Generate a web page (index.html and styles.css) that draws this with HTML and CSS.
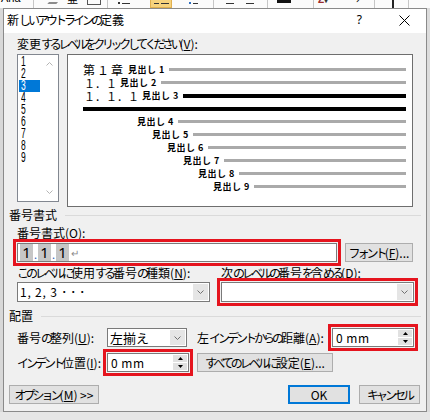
FILE: index.html
```html
<!DOCTYPE html>
<html lang="ja">
<head>
<meta charset="utf-8">
<title>新しいアウトラインの定義</title>
<link rel="stylesheet" href="styles.css">
</head>
<body>
<div class="ribbon">
  <span class="rb-text">Aria</span>
  <span class="rb-sep sep-a"></span>
  <span class="rb-eraser"></span>
  <span class="rb-kanji">亜</span>
  <span class="rb-box"></span>
  <span class="rb-sep sep-b"></span>
  <span class="rb-bullet"><i class="dot"></i><i class="dash"></i></span>
  <span class="rb-yellow"><i class="dash short"></i><i class="dash"></i></span>
  <span class="rb-num"><i class="dot blue"></i><i class="dash short"></i></span>
  <span class="rb-sep sep-d"></span>
  <span class="rb-lines"><i class="dash"></i></span>
  <span class="rb-lines l2"><i class="dash"></i></span>
  <span class="rb-sep sep-e"></span>
  <span class="rb-a"></span>
  <span class="rb-sep sep-f"></span>
  <span class="rb-z">Z<b>▾</b></span>
  <span class="rb-arrow">→</span>
  <span class="rb-sep sep-g"></span>
  <span class="rb-bar"></span>
  <span class="rb-sep sep-h"></span>
</div>
<div class="stage">
  <div class="bd-left"></div>
  <div class="dialog">
    <div class="titlebar">
      <span class="title">新<span class="k">しいアウトラインの</span>定義</span>
      <span class="help">?</span>
      <svg class="close" viewBox="0 0 11 11"><path d="M0.5 0.5L10.5 10.5M10.5 0.5L0.5 10.5" stroke="#000" stroke-width="1" fill="none"/></svg>
    </div>
    <div class="client">
      <div class="lbl lbl-top">変更<span class="k k2">するレベルをクリックしてください</span>(<u>V</u>):</div>
      <div class="toprow">
        <div class="listbox">
          <div class="items">
            <div class="item"><span>1</span></div>
            <div class="item"><span>2</span></div>
            <div class="item sel"><span>3</span></div>
            <div class="item"><span>4</span></div>
            <div class="item"><span>5</span></div>
            <div class="item"><span>6</span></div>
            <div class="item"><span>7</span></div>
            <div class="item"><span>8</span></div>
            <div class="item"><span>9</span></div>
          </div>
          <div class="lb-scroll">
            <svg class="chev" viewBox="0 0 7 4"><polyline points="0.5,3.5 3.5,0.5 6.5,3.5" fill="none" stroke="#b4b4b4" stroke-width="1"/></svg>
            <svg class="chev" viewBox="0 0 7 4"><polyline points="0.5,0.5 3.5,3.5 6.5,0.5" fill="none" stroke="#b4b4b4" stroke-width="1"/></svg>
          </div>
        </div>
        <div class="preview">
          <div class="prow"><span class="pn ch">第１章</span><span class="ph">見出し 1</span><span class="pl"></span></div>
          <div class="prow in"><span class="pn">１．１</span><span class="ph">見出し 2</span><span class="pl"></span></div>
          <div class="prow in"><span class="pn">１．１．１</span><span class="ph">見出し 3</span><span class="pl blk"></span></div>
          <div class="prow"><span class="pl blk"></span></div>
          <div class="prow i4"><span class="ph">見出し 4</span><span class="pl"></span></div>
          <div class="prow i5"><span class="ph">見出し 5</span><span class="pl"></span></div>
          <div class="prow i6"><span class="ph">見出し 6</span><span class="pl"></span></div>
          <div class="prow i7"><span class="ph">見出し 7</span><span class="pl"></span></div>
          <div class="prow i8"><span class="ph">見出し 8</span><span class="pl"></span></div>
          <div class="prow i9"><span class="ph">見出し 9</span><span class="pl"></span></div>
        </div>
      </div>

      <div class="grp">番号書式</div>
      <div class="lbl lbl-fmt">番号書式(<u>O</u>):</div>
      <div class="fmtrow">
        <div class="fmt hl"><span class="fb">1</span><span class="fd">.</span><span class="fb">1</span><span class="fd">.</span><span class="fb">1</span><span class="ret">↵</span></div>
        <div class="btn btn-font"><span class="k">フォント</span>(<u>F</u>)...</div>
      </div>
      <div class="lblrow">
        <div class="lbl"><span class="k">このレベルに</span>使用<span class="k">する</span>番号<span class="k">の</span>種類(<u>N</u>):</div>
        <div class="lbl">次<span class="k">のレベルの</span>番号<span class="k">を</span>含<span class="k">める</span>(<u>D</u>):</div>
      </div>
      <div class="comborow">
        <div class="combo"><span class="cb-text num">1, 2, 3 <span class="dots">･･･</span></span><span class="cb-btn"><svg class="chev" viewBox="0 0 7 4"><polyline points="0.5,0.5 3.5,3.5 6.5,0.5" fill="none" stroke="#707070" stroke-width="1"/></svg></span></div>
        <div class="combo hl"><span class="cb-text"></span><span class="cb-btn"><svg class="chev" viewBox="0 0 7 4"><polyline points="0.5,0.5 3.5,3.5 6.5,0.5" fill="none" stroke="#707070" stroke-width="1"/></svg></span></div>
      </div>

      <div class="grp grp-place">配置</div>
      <div class="arow arow1">
        <div class="alab">番号<span class="k">の</span>整列(<u>U</u>):</div>
        <div class="combo sm"><span class="cb-text">左揃<span class="k">え</span></span><span class="cb-btn"><svg class="chev" viewBox="0 0 7 4"><polyline points="0.5,0.5 3.5,3.5 6.5,0.5" fill="none" stroke="#707070" stroke-width="1"/></svg></span></div>
        <div class="alab2">左<span class="k">インデントからの</span>距離(<u>A</u>):</div>
        <div class="spin hl"><span class="sp-text">0 mm</span><span class="sp-btns"><i><svg viewBox="0 0 5 3"><polygon points="0,3 2.5,0 5,3" fill="#000"/></svg></i><i><svg viewBox="0 0 5 3"><polygon points="0,0 5,0 2.5,3" fill="#000"/></svg></i></span></div>
      </div>
      <div class="arow arow2">
        <div class="alab"><span class="k">インデント</span>位置(<u>I</u>):</div>
        <div class="spin hl"><span class="sp-text">0 mm</span><span class="sp-btns"><i><svg viewBox="0 0 5 3"><polygon points="0,3 2.5,0 5,3" fill="#000"/></svg></i><i><svg viewBox="0 0 5 3"><polygon points="0,0 5,0 2.5,3" fill="#000"/></svg></i></span></div>
        <div class="btn btn-all"><span class="k">すべてのレベルに</span>設定(<u>E</u>)...</div>
      </div>

      <div class="btnrow">
        <div class="btn btn-opt"><span class="k">オプション</span>(<u>M</u>) &gt;&gt;</div>
        <div class="btn btn-ok">OK</div>
        <div class="btn btn-cancel"><span class="k">キャンセル</span></div>
      </div>
    </div>
  </div>
  <div class="bd-right"></div>
</div>
</body>
</html>
```

FILE: styles.css
```css
* { box-sizing: border-box; margin: 0; padding: 0; }
html, body { width: 430px; height: 420px; overflow: hidden; }
body {
  background: #e6e6e6;
  font-family: "Noto Sans CJK JP", "Noto Sans", sans-serif;
  font-size: 12px;
  color: #000;
}
u { text-decoration: underline; text-underline-offset: 1px; }
i { font-style: normal; }
.k { letter-spacing: -3px; }
.k.k2 { letter-spacing: -3.3px; }

/* background ribbon strip */
.ribbon { height: 8px; background: #fbfbfb; display: flex; align-items: flex-start; overflow: hidden; }
.rb-text { width: 30px; font-family: "Liberation Sans", sans-serif; font-size: 11px; line-height: 11px; margin-top: -7px; padding-left: 1px; }
.rb-sep { width: 1px; height: 8px; background: #c6c6c6; flex: none; }
.sep-a { margin-left: 3px; }
.rb-eraser { width: 9px; height: 4px; margin-left: 15px; border-bottom: 2px solid #8c8c8c; transform: skewX(-40deg); }
.rb-kanji { width: 10px; margin-left: 9px; font-size: 11px; line-height: 11px; margin-top: -7px; }
.rb-box { width: 14px; height: 5px; margin-left: 10px; border: 1px solid #555; border-top: none; }
.sep-b { margin-left: 6px; }
.rb-bullet, .rb-yellow, .rb-num, .rb-lines { display: flex; align-items: center; gap: 2px; height: 6px; }
.rb-bullet { margin-left: 10px; width: 16px; }
.rb-yellow { margin-left: 16px; width: 22px; height: 8px; background: #f6d27c; border: 1px solid #e0b050; border-top: none; padding-left: 3px; }
.rb-num { margin-left: 17px; width: 14px; }
.rb-lines { margin-left: 12px; width: 12px; }
.rb-lines.l2 { margin-left: 8px; }
.dot { width: 2px; height: 2px; background: #333; }
.dot.blue { background: #2f6fc0; }
.dash { width: 8px; height: 1px; background: #333; }
.dash.short { width: 5px; }
.sep-d { margin-left: 10px; }
.sep-e { margin-left: 9px; }
.rb-a { width: 14px; height: 3px; margin-left: 9px; background: #111; }
.sep-f { margin-left: 22px; }
.rb-z { margin-left: 4px; width: 18px; color: #9b2c2c; font-family: "Liberation Sans", sans-serif; font-size: 10px; line-height: 10px; margin-top: -5px; font-weight: 700; }
.rb-z b { font-size: 8px; color: #333; }
.rb-arrow { margin-left: 14px; width: 12px; font-size: 10px; line-height: 10px; margin-top: -5px; }
.sep-g { margin-left: 12px; }
.rb-bar { width: 2px; height: 8px; background: #222; margin-left: 17px; }
.sep-h { margin-left: 14px; }

/* desktop area */
.stage { display: flex; height: 404px; }
.bd-left { width: 3px; background: #d8d8d8; flex: none; }
.bd-right { flex: 1; background: #dcdcdc; }

.dialog {
  width: 424px; height: 404px; flex: none;
  border: 1px solid #8a8a8a;
  background: #f0f0f0;
  display: flex; flex-direction: column;
}
.titlebar { height: 24px; flex: none; background: #fff; display: flex; align-items: center; padding: 0 16px 2px 3px; }
.title { font-size: 12px; line-height: 16px; white-space: nowrap; }
.help { margin-left: auto; margin-right: 37px; font-family: "Noto Sans", sans-serif; font-size: 12px; line-height: 16px; }
.close { width: 11px; height: 11px; display: block; }

.client { flex: 1; padding-left: 13px; display: flex; flex-direction: column; }
.lbl { height: 16px; line-height: 16px; white-space: nowrap; }
.lbl-top { margin-top: 3px; }

.toprow { display: flex; gap: 8px; margin-top: 2px; align-items: flex-start; height: 153px; }

.listbox { width: 42px; height: 148px; border: 1px solid #828790; background: #fff; display: flex; }
.items { width: 22px; padding: 1px 0 0 1px; }
.item { height: 12px; line-height: 12px; padding-left: 2px; font-family: "Liberation Sans", sans-serif; font-size: 10px; }
.item span { display: inline-block; line-height: 11px; transform: scale(0.85, 1.4); transform-origin: left center; }
.item.sel { background: #0078d7; color: #fff; }
.lb-scroll { flex: 1; display: flex; flex-direction: column; justify-content: space-between; align-items: center; padding: 7px 0 7px; }
.chev { width: 7px; height: 4px; display: block; }

.preview { width: 346px; height: 153px; border: 1px solid #6e6e6e; background: #fff; padding: 8px 6px 0 15px; display: flex; flex-direction: column; }
.prow { height: 13px; display: flex; align-items: center; flex: none; }
.prow.in { padding-left: 1px; }
.prow.i4 { padding-left: 54px; }
.prow.i5 { padding-left: 69px; }
.prow.i6 { padding-left: 84px; }
.prow.i7 { padding-left: 100px; }
.prow.i8 { padding-left: 115px; }
.prow.i9 { padding-left: 130px; }
.pn { font-size: 11px; line-height: 12px; white-space: nowrap; margin-right: 3px; }
.pn.ch { font-size: 12px; letter-spacing: 2px; margin-right: 3px; }
.ph { font-size: 9px; font-weight: 700; line-height: 11px; white-space: nowrap; margin-right: 4px; letter-spacing: 0.5px; }
.pl { flex: 1; height: 3px; background: #aaaaaa; }
.pl.blk { height: 4px; background: #000; }

.grp { display: flex; align-items: center; margin-left: -8px; height: 16px; line-height: 16px; white-space: nowrap; }
.grp::after { content: ""; flex: 1; height: 1px; background: #dadada; margin: 0 5px 0 8px; }
.grp-place { margin-top: 6px; }
.lbl-fmt { margin-top: 2px; }

.hl { outline: 3px solid #e5141e; outline-offset: 1px; }

.fmtrow { display: flex; gap: 8px; margin-top: 2px; align-items: flex-start; }
.fmt { width: 320px; height: 19px; background: #fff; border: 1px solid #7a7a7a; display: flex; align-items: center; padding-left: 2px; }
.fb { display: inline-block; width: 13px; height: 17px; background: #c6c6c6; text-align: center; font-family: "Noto Sans", sans-serif; font-size: 15px; line-height: 17px; }
.fd { display: inline-block; width: 5px; height: 17px; text-align: center; color: #2a62b8; font-size: 11px; line-height: 20px; }
.ret { margin-left: 2px; color: #8a8a8a; font-size: 10px; line-height: 17px; }

.btn { height: 19px; background: #e1e1e1; border: 1px solid #adadad; display: flex; align-items: center; justify-content: center; line-height: 16px; white-space: nowrap; flex: none; }
.btn-font { width: 68px; }

.lblrow { display: grid; grid-template-columns: 193px 193px; column-gap: 11px; margin-top: 3px; }
.comborow { display: grid; grid-template-columns: 193px 193px; column-gap: 11px; margin-top: 1px; }
.combo { height: 20px; background: #fff; border: 1px solid #7a7a7a; display: flex; }
.cb-text { flex: 1; padding-left: 2px; line-height: 18px; white-space: nowrap; font-size: 12px; }
.cb-text.num { letter-spacing: 0.8px; }
.dots { letter-spacing: 3px; }
.cb-btn { width: 15px; margin: 1px; background: #e5e5e5; display: flex; align-items: center; justify-content: center; }

.arow { display: flex; align-items: center; height: 19px; }
.arow1 { margin-top: 4px; }
.arow2 { margin-top: 6px; }
.alab { width: 90px; white-space: nowrap; line-height: 16px; }
.combo.sm { width: 80px; height: 19px; }
.combo.sm .cb-text { line-height: 17px; font-size: 13px; }
.alab2 { width: 135px; margin-left: 10px; white-space: nowrap; line-height: 16px; }
.spin { width: 82px; height: 19px; background: #fff; border: 1px solid #7a7a7a; display: flex; flex: none; }
.sp-text { flex: 1; padding-left: 3px; line-height: 17px; white-space: nowrap; letter-spacing: 0.5px; }
.sp-btns { width: 16px; display: flex; flex-direction: column; gap: 1px; padding: 1px; }
.sp-btns i { flex: 1; background: #e1e1e1; display: flex; align-items: center; justify-content: center; }
.sp-btns svg { width: 5px; height: 3px; display: block; }
.btn-all { width: 136px; margin-left: 8px; }

.btnrow { display: flex; margin-top: 13px; }
.btn-opt { width: 90px; margin-left: -8px; }
.btn-ok { width: 62px; margin-left: auto; border: 2px solid #0078d7; }
.btn-cancel { width: 61px; margin-left: 9px; margin-right: 6px; }
```
